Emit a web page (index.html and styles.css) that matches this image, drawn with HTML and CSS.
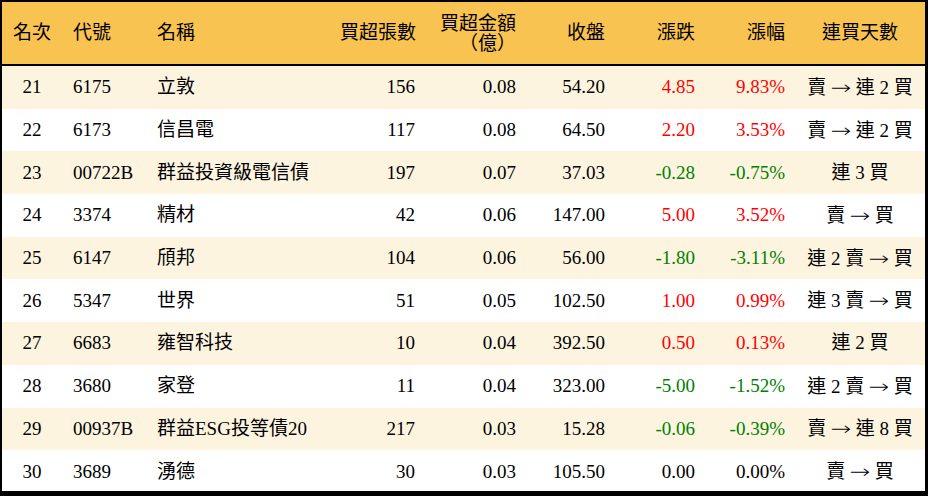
FILE: index.html
```html
<!DOCTYPE html>
<html lang="zh-Hant">
<head>
<meta charset="utf-8">
<title>買超排行</title>
<link rel="stylesheet" href="styles.css">
</head>
<body>
<div class="frame">
<table class="rank">
  <colgroup>
    <col class="c-rank"><col class="c-code"><col class="c-name"><col class="c-vol"><col class="c-amt"><col class="c-close"><col class="c-chg"><col class="c-pct"><col class="c-days">
  </colgroup>
  <thead>
    <tr>
      <th class="ctr">名次</th>
      <th class="lft">代號</th>
      <th class="lft">名稱</th>
      <th class="rgt">買超張數</th>
      <th class="rgt two">買超金額<br>（億）</th>
      <th class="rgt">收盤</th>
      <th class="rgt">漲跌</th>
      <th class="rgt">漲幅</th>
      <th class="ctr">連買天數</th>
    </tr>
  </thead>
  <tbody>
    <tr class="alt"><td class="ctr">21</td><td class="lft">6175</td><td class="lft">立敦</td><td class="rgt">156</td><td class="rgt">0.08</td><td class="rgt">54.20</td><td class="rgt up">4.85</td><td class="rgt up">9.83%</td><td class="ctr">賣 <span class="arr">→</span> 連 2 買</td></tr>
    <tr><td class="ctr">22</td><td class="lft">6173</td><td class="lft">信昌電</td><td class="rgt">117</td><td class="rgt">0.08</td><td class="rgt">64.50</td><td class="rgt up">2.20</td><td class="rgt up">3.53%</td><td class="ctr">賣 <span class="arr">→</span> 連 2 買</td></tr>
    <tr class="alt"><td class="ctr">23</td><td class="lft">00722B</td><td class="lft">群益投資級電信債</td><td class="rgt">197</td><td class="rgt">0.07</td><td class="rgt">37.03</td><td class="rgt down">-0.28</td><td class="rgt down">-0.75%</td><td class="ctr">連 3 買</td></tr>
    <tr><td class="ctr">24</td><td class="lft">3374</td><td class="lft">精材</td><td class="rgt">42</td><td class="rgt">0.06</td><td class="rgt">147.00</td><td class="rgt up">5.00</td><td class="rgt up">3.52%</td><td class="ctr">賣 <span class="arr">→</span> 買</td></tr>
    <tr class="alt"><td class="ctr">25</td><td class="lft">6147</td><td class="lft">頎邦</td><td class="rgt">104</td><td class="rgt">0.06</td><td class="rgt">56.00</td><td class="rgt down">-1.80</td><td class="rgt down">-3.11%</td><td class="ctr">連 2 賣 <span class="arr">→</span> 買</td></tr>
    <tr><td class="ctr">26</td><td class="lft">5347</td><td class="lft">世界</td><td class="rgt">51</td><td class="rgt">0.05</td><td class="rgt">102.50</td><td class="rgt up">1.00</td><td class="rgt up">0.99%</td><td class="ctr">連 3 賣 <span class="arr">→</span> 買</td></tr>
    <tr class="alt"><td class="ctr">27</td><td class="lft">6683</td><td class="lft">雍智科技</td><td class="rgt">10</td><td class="rgt">0.04</td><td class="rgt">392.50</td><td class="rgt up">0.50</td><td class="rgt up">0.13%</td><td class="ctr">連 2 買</td></tr>
    <tr><td class="ctr">28</td><td class="lft">3680</td><td class="lft">家登</td><td class="rgt">11</td><td class="rgt">0.04</td><td class="rgt">323.00</td><td class="rgt down">-5.00</td><td class="rgt down">-1.52%</td><td class="ctr">連 2 賣 <span class="arr">→</span> 買</td></tr>
    <tr class="alt"><td class="ctr">29</td><td class="lft">00937B</td><td class="lft">群益ESG投等債20</td><td class="rgt">217</td><td class="rgt">0.03</td><td class="rgt">15.28</td><td class="rgt down">-0.06</td><td class="rgt down">-0.39%</td><td class="ctr">賣 <span class="arr">→</span> 連 8 買</td></tr>
    <tr><td class="ctr">30</td><td class="lft">3689</td><td class="lft">湧德</td><td class="rgt">30</td><td class="rgt">0.03</td><td class="rgt">105.50</td><td class="rgt">0.00</td><td class="rgt">0.00%</td><td class="ctr">賣 <span class="arr">→</span> 買</td></tr>
  </tbody>
</table>
</div>
</body>
</html>
```
FILE: styles.css
```css
html, body {
  margin: 0;
  padding: 0;
  background: #ffffff;
}
body {
  font-family: "Liberation Serif", "Noto Sans CJK TC", serif;
  font-size: 19px;
  color: #000000;
}
.frame {
  width: 928px;
  height: 496px;
  box-sizing: border-box;
  border-style: solid;
  border-color: #000000;
  border-width: 2px 3px 5px 2px;
  overflow: hidden;
}
.rank {
  width: 923px;
  border-collapse: separate;
  border-spacing: 0;
  table-layout: fixed;
}
.c-rank { width: 60px; }
.c-code { width: 88px; }
.c-name { width: 190px; }
.c-vol { width: 85px; }
.c-amt { width: 101px; }
.c-close { width: 89px; }
.c-chg { width: 90px; }
.c-pct { width: 90px; }
.c-days { width: 130px; }
.rank th {
  background: #f8c350;
  font-weight: normal;
  height: 60px;
  padding: 0;
  border-bottom: 2px solid #000000;
  line-height: 20px;
  white-space: nowrap;
}
.rank td {
  height: 42.7px;
  padding: 0;
  white-space: nowrap;
  line-height: 20px;
}
.rank tr.alt td {
  background: #fdf4e0;
}
.ctr { text-align: center; }
.lft { text-align: left; }
.rgt { text-align: right; }
th.lft:nth-child(2), td.lft:nth-child(2) { padding-left: 11px; }
th.lft:nth-child(3), td.lft:nth-child(3) { padding-left: 7px; }
.rank .rgt { padding-right: 10px; }
.rank .two { padding-top: 2px; }
.arr {
  font-family: "DejaVu Sans", sans-serif;
  font-weight: 200;
  display: inline-block;
  transform: scaleX(1.3);
  margin: 0 2px;
}
.up { color: #ff0000; }
.down { color: #008000; }
```
